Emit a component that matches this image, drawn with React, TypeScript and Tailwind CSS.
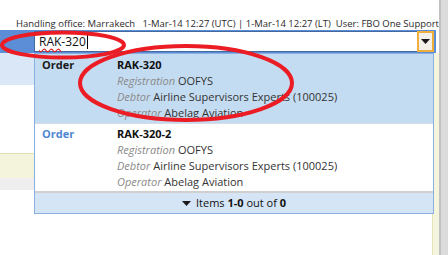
import React from 'react';

const font = { fontFamily: '"Open Sans", "Liberation Sans", sans-serif' };

const Triangle: React.FC<{ className?: string }> = ({ className }) => (
  <svg width="9" height="5" viewBox="0 0 9 5" className={className}>
    <path d="M0 0 L9 0 L4.5 5 Z" fill="#1a1a1a" />
  </svg>
);

type Result = {
  kind: string;
  code: string;
  registration: string;
  debtor: string;
  operator: string;
};

const RESULTS: Result[] = [
  { kind: 'Order', code: 'RAK-320', registration: 'OOFYS', debtor: 'Airline Supervisors Experts (100025)', operator: 'Abelag Aviation' },
  { kind: 'Order', code: 'RAK-320-2', registration: 'OOFYS', debtor: 'Airline Supervisors Experts (100025)', operator: 'Abelag Aviation' },
];

const ResultRow: React.FC<{ r: Result; active: boolean }> = ({ r, active }) => (
  <div
    className={
      active
        ? 'flex bg-[#c4dcf1] pt-[3px] pb-[2px] border-b border-[#d6dde6]'
        : 'flex bg-white pt-[2px] pb-[1px] border-b-2 border-[#cfcfcf]'
    }
  >
    <div className={`w-[82px] pl-[7px] font-bold leading-[16px] ${active ? 'text-[#1a1a1a]' : 'text-[#4f86d4]'}`}>
      {r.kind}
    </div>
    <div className="flex flex-col leading-[16px] text-[#333]">
      <span className="font-bold text-[#111]">{r.code}</span>
      <span><i className="text-[#8a8a8a]">Registration</i> {r.registration}</span>
      <span><i className="text-[#8a8a8a]">Debtor</i> {r.debtor}</span>
      <span><i className="text-[#8a8a8a]">Operator</i> {r.operator}</span>
    </div>
  </div>
);

const App: React.FC = () => {
  return (
    <div className="relative w-[448px] h-[255px] overflow-hidden bg-white flex" style={font}>
      <div className="w-[439px] flex flex-col">
        {/* status line */}
        <div className="h-[30px] pt-[18px] pl-[16px] flex text-[9.5px] leading-[12px] text-[#2b2b2b] whitespace-nowrap">
          <span className="w-[127px]">Handling office: Marrakech</span>
          <span className="w-[194px]">1-Mar-14 12:27 (UTC) | 1-Mar-14 12:27 (LT)</span>
          <span>User: FBO One Support</span>
        </div>

        {/* search bar */}
        <div className="h-[23px] flex">
          <div className="w-[436px] bg-[#5b8ed6] pl-[34px] pt-[1px]">
            <div className="w-[400px] h-[21px] bg-white border border-[#4468a0] flex items-center">
              <div className="flex-1 pl-[4px] flex items-center text-[12px] text-[#111]">
                <span className="underline decoration-wavy decoration-[#e02020] underline-offset-2">RAK</span>
                <span>-320</span>
                <span className="w-px h-[14px] bg-black ml-px" />
              </div>
              <div className="w-[17px] h-[21px] -mr-px -my-px border-2 border-[#f0ae3c] bg-[#f4f1ea] flex items-center justify-center">
                <Triangle />
              </div>
            </div>
          </div>
        </div>

        {/* page below */}
        <div className="flex-1 flex">
          <div className="w-[432px] flex flex-col">
            <div className="h-[32px] bg-[#dae7f6]" />
            <div className="h-[68px] bg-white" />
            <div className="h-[25px] bg-[#f4f3dc] border-t border-[#e2e0b4]" />
            <div className="h-[12px] bg-[#eeeeee]" />
            <div className="flex-1 bg-white" />
          </div>
          <div className="w-[7px] bg-[#f5f4dd] border-l border-[#e6e4bb]" />
        </div>
      </div>
      <div className="w-[2px] bg-[#c2c2c2]" />
      <div className="flex-1 bg-[#dcdcdc]" />

      {/* autocomplete list */}
      <div className="absolute left-[34px] top-[53px] w-[400px] border border-[#8aafe3] bg-white text-[11px]">
        {RESULTS.map((r, i) => (
          <ResultRow key={r.code} r={r} active={i === 0} />
        ))}
        <div className="h-[20px] bg-[#d5e5f6] flex items-center justify-center gap-[5px] text-[#111]">
          <Triangle />
          <span>
            Items <b>1-0</b> out of <b>0</b>
          </span>
        </div>
      </div>

      {/* red annotations */}
      <svg className="absolute inset-0 pointer-events-none" width="448" height="255" viewBox="0 0 448 255">
        <ellipse cx="63" cy="45" rx="61" ry="12.5" fill="none" stroke="#ec1c24" strokeWidth="4" />
        <ellipse cx="186" cy="83" rx="106" ry="37" fill="none" stroke="#ec1c24" strokeWidth="4" />
      </svg>
    </div>
  );
};

export default App;
